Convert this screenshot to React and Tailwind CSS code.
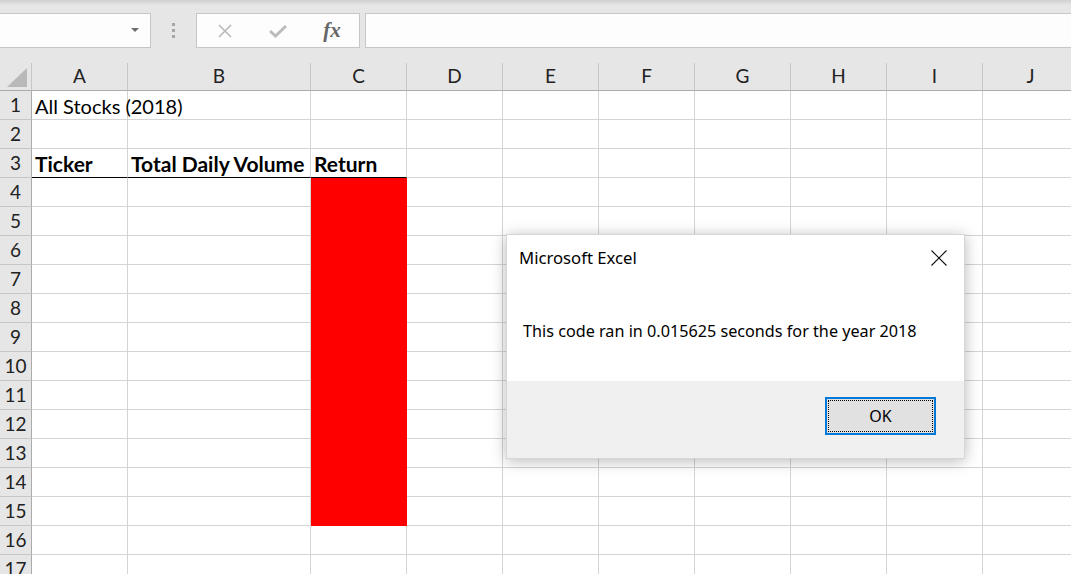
import React from 'react';

// --- column / row setup ---
const columns = ['A', 'B', 'C', 'D', 'E', 'F', 'G', 'H', 'I', 'J'];
const rowCount = 17;

const cellFont = { fontFamily: 'Lato, "Liberation Sans", sans-serif' };

const cellContent = {
    '1-A': { text: 'All Stocks (2018)' },
    '3-A': { text: 'Ticker', bold: true },
    '3-B': { text: 'Total Daily Volume', bold: true },
    '3-C': { text: 'Return', bold: true },
};

const Cell = ({ row, col }) => {
    const key = `${row}-${col}`;
    const content = cellContent[key];
    const isRed = col === 'C' && row >= 4 && row <= 15;
    const isHeaderRow = row === 3 && ['A', 'B', 'C'].includes(col);

    let cls = 'flex items-end pl-[3px] pb-[3px] whitespace-nowrap overflow-visible border-r border-b ';
    if (isRed) {
        cls += 'bg-[#ff0000] border-[#ff0000]';
    } else if (isHeaderRow) {
        cls += 'bg-white border-r-[#d4d4d4] border-b-black';
    } else {
        cls += 'bg-white border-[#d4d4d4]';
    }

    return (
        <div className={cls}>
            {content && (
                <span className={`leading-none text-black relative z-10 ${content.bold ? 'font-bold text-[21px]' : 'text-[20px]'}`}>
                    {content.text}
                </span>
            )}
        </div>
    );
};

const Toolbar = () => (
    <div className="relative h-[63px] bg-[#e6e6e6]">
        <div className="h-[5px] bg-gradient-to-b from-[#cfcfcf] to-[#e6e6e6]" />
        <div className="flex items-start pt-[8px]">
            {/* name box */}
            <div className="w-[151px] h-[35px] bg-[#fdfdfd] border border-l-0 border-[#c6c6c6] flex items-center justify-end pr-[11px]">
                <svg width="8" height="5" viewBox="0 0 8 5">
                    <path d="M0 0 L8 0 L4 4 Z" fill="#6d6d6d" />
                </svg>
            </div>
            {/* grip dots */}
            <div className="w-[45px] h-[35px] flex flex-col items-center justify-center gap-[3px]">
                <div className="w-[3px] h-[3px] bg-[#a6a6a6]" />
                <div className="w-[3px] h-[3px] bg-[#a6a6a6]" />
                <div className="w-[3px] h-[3px] bg-[#a6a6a6]" />
            </div>
            {/* cancel / enter / fx */}
            <div className="w-[164px] h-[35px] bg-[#fdfdfd] border border-[#c6c6c6] flex items-center">
                <div className="w-[54px] flex justify-center pl-[2px]">
                    <svg width="14" height="14" viewBox="0 0 14 14">
                        <path d="M1 1 L13 13 M13 1 L1 13" stroke="#b8b8b8" strokeWidth="1.6" />
                    </svg>
                </div>
                <div className="w-[54px] flex justify-center">
                    <svg width="18" height="14" viewBox="0 0 18 14">
                        <path d="M1 7 L6.5 12 L17 2" stroke="#bcbcbc" strokeWidth="3" fill="none" />
                    </svg>
                </div>
                <div className="w-[54px] flex justify-center">
                    <span
                        className="italic font-bold text-[21px] leading-none text-[#666]"
                        style={{ fontFamily: '"Liberation Serif", serif' }}
                    >
                        fx
                    </span>
                </div>
            </div>
            {/* formula box */}
            <div className="ml-[5px] flex-1 h-[35px] bg-[#fdfdfd] border border-r-0 border-[#c6c6c6]" />
        </div>
    </div>
);

const Dialog = () => (
    <div
        className="absolute left-[506px] top-[234px] w-[459px] h-[225px] bg-white border border-[#d6d6d6] shadow-[0_2px_14px_rgba(0,0,0,0.28)] flex flex-col"
        style={{ fontFamily: '"Noto Sans", "Open Sans", sans-serif' }}
    >
        <div className="flex-1 relative">
            <div className="absolute left-[12px] top-[10px] text-[16.7px] text-black">Microsoft Excel</div>
            <div className="absolute right-[17px] top-[15px]">
                <svg width="16" height="16" viewBox="0 0 16 16">
                    <path d="M0.5 0.5 L15.5 15.5 M15.5 0.5 L0.5 15.5" stroke="#111" strokeWidth="1.1" />
                </svg>
            </div>
            <div className="absolute left-[16px] top-[84px] text-[16.2px] text-black">
                This code ran in 0.015625 seconds for the year 2018
            </div>
        </div>
        <div className="h-[77px] bg-[#f0f0f0] flex justify-end items-start pt-[16px] pr-[28px]">
            <div className="w-[111px] h-[38px] border-2 border-[#0078d7] bg-[#e1e1e1] p-[1px]">
                <div className="w-full h-full border border-dotted border-black flex items-center justify-center text-[16px] text-black">
                    OK
                </div>
            </div>
        </div>
    </div>
);

const App = () => {
    const rows = Array.from({ length: rowCount }, (_, i) => i + 1);

    return (
        <div className="relative w-[1071px] h-[574px] overflow-hidden bg-white">
            <Toolbar />

            <div
                className="grid grid-cols-[32px_96px_183px_96px_96px_96px_96px_96px_96px_96px_96px] grid-rows-[28px_repeat(17,29px)]"
                style={cellFont}
            >
                {/* corner */}
                <div className="bg-[#e6e6e6] border-r border-b border-r-[#c6c6c6] border-b-[#ababab] flex items-end justify-end pr-[4px] pb-[3px]">
                    <svg width="20" height="19" viewBox="0 0 20 19">
                        <path d="M20 0 L20 19 L0 19 Z" fill="#b9b9b9" />
                    </svg>
                </div>
                {columns.map(col => (
                    <div
                        key={col}
                        className="bg-[#e6e6e6] border-r border-b border-r-[#c6c6c6] border-b-[#ababab] flex items-center justify-center text-[19px] text-[#222]"
                    >
                        {col}
                    </div>
                ))}

                {rows.map(row => (
                    <React.Fragment key={row}>
                        <div className="bg-[#e6e6e6] border-r border-b border-r-[#ababab] border-b-[#c6c6c6] flex items-center justify-center text-[19px] text-[#222]">
                            {row}
                        </div>
                        {columns.map(col => (
                            <Cell key={col} row={row} col={col} />
                        ))}
                    </React.Fragment>
                ))}
            </div>

            <Dialog />
        </div>
    );
};

export default App;
